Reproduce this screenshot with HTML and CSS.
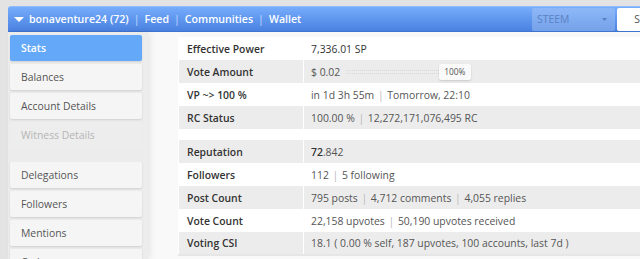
FILE: index.html
```html
<!DOCTYPE html>
<html>
<head>
<meta charset="utf-8">
<link rel="stylesheet" href="styles.css">
</head>
<body>
<div class="topbar">
  <div class="nav">
    <svg class="caret" width="10" height="5" viewBox="0 0 10 5"><path d="M0 0 L10 0 L5 5 Z" fill="#fff"/></svg>
    <span class="link">bonaventure24 (72)</span><span class="sep">|</span>
    <span class="link">Feed</span><span class="sep">|</span>
    <span class="link">Communities</span><span class="sep">|</span>
    <span class="link">Wallet</span>
  </div>
  <div class="tools">
    <div class="select"><span>STEEM</span><svg width="5" height="3" viewBox="0 0 5 3"><path d="M0 0 L5 0 L2.5 3 Z" fill="#5a7fc0"/></svg></div>
    <div class="search">S</div>
  </div>
</div>
<div class="layout">
  <aside class="sidebar">
    <div class="item active">Stats</div>
    <div class="item">Balances</div>
    <div class="item">Account Details</div>
    <div class="item disabled">Witness Details</div>
    <div class="spacer"></div>
    <div class="item">Delegations</div>
    <div class="item">Followers</div>
    <div class="item">Mentions</div>
    <div class="item">Orders</div>
  </aside>
  <main class="main">
    <table class="stats">
      <tr><th>Effective Power</th><td class="strong">7,336.01 SP</td></tr>
      <tr class="alt"><th>Vote Amount</th><td><div class="vote"><span>$ 0.02</span><span class="slider"><span class="track"></span><span class="badge">100%</span></span></div></td></tr>
      <tr><th>VP ~&gt; 100 %</th><td>in 1d 3h 55m <span class="bar">|</span> Tomorrow, 22:10</td></tr>
      <tr class="alt"><th>RC Status</th><td>100.00 % <span class="bar">|</span> 12,272,171,076,495 RC</td></tr>
      <tr class="gap"><th></th><td></td></tr>
      <tr class="alt"><th>Reputation</th><td><b>72</b>.842</td></tr>
      <tr><th>Followers</th><td>112 <span class="bar">|</span> 5 following</td></tr>
      <tr class="alt"><th>Post Count</th><td>795 posts <span class="bar">|</span> 4,712 comments <span class="bar">|</span> 4,055 replies</td></tr>
      <tr><th>Vote Count</th><td>22,158 upvotes <span class="bar">|</span> 50,190 upvotes received</td></tr>
      <tr class="alt"><th>Voting CSI</th><td>18.1 ( 0.00 % self, 187 upvotes, 100 accounts, last 7d )</td></tr>
    </table>
  </main>
</div>
</body>
</html>
```
FILE: styles.css
```css
* { box-sizing: border-box; }
html, body { margin: 0; padding: 0; }
body {
  background: #e3e3e3;
  font-family: "Open Sans", "DejaVu Sans", sans-serif;
  font-size: 10.4px;
  color: #555;
  width: 640px;
  height: 259px;
  overflow: hidden;
}
.topbar {
  margin: 6px 0 0 8px;
  height: 26px;
  border-radius: 3px 0 0 0;
  background: linear-gradient(#78adfb, #5a92ec 60%, #4b82e0);
  border-top: 1px solid #8dbcfc;
  border-bottom: 1px solid #3f74cf;
  display: flex;
  align-items: center;
  justify-content: space-between;
}
.nav {
  display: flex;
  align-items: center;
  padding-left: 6px;
  color: #fff;
  font-size: 10.6px;
  font-weight: 600;
  white-space: nowrap;
}
.caret { margin-right: 5px; margin-top: 1px; }
.sep { color: #c4dafb; font-weight: 400; margin: 0 5px; }
.tools { display: flex; align-items: center; gap: 2px; height: 100%; }
.select {
  width: 83px;
  height: 23px;
  background: rgba(170, 200, 245, 0.45);
  border-radius: 2px;
  display: flex;
  align-items: center;
  justify-content: space-between;
  padding: 0 8px 0 5px;
  color: #5c82c2;
  font-size: 10.4px;
}
.search {
  width: 23px;
  height: 23px;
  background: #fff;
  border-radius: 2px 0 0 2px;
  display: flex;
  align-items: center;
  justify-content: flex-end;
  color: #555;
  font-size: 10.4px;
  overflow: hidden;
}
.layout { display: flex; padding-left: 8px; }
.sidebar {
  width: 140px;
  flex: none;
  background: #ececec;
  padding: 3px 6px 0 2px;
  display: flex;
  flex-direction: column;
  gap: 3px;
  height: 227px;
  box-shadow: 3px 0 6px rgba(0,0,0,0.07);
  position: relative;
  z-index: 1;
}
.item {
  height: 26px;
  flex: none;
  background: #f5f5f5;
  border-radius: 2px;
  box-shadow: 0 1px 2px rgba(0,0,0,0.12);
  padding: 0 11px;
  line-height: 26px;
  color: #555;
  font-size: 10.4px;
  white-space: nowrap;
}
.item.active {
  background: #64a9f9;
  color: #fff;
  font-weight: 600;
}
.item.disabled { color: #b5b5b5; background: #ededed; box-shadow: none; }
.spacer { height: 8px; flex: none; }
.main {
  flex: 1;
  background: #f9f9f9;
  padding: 5px 0 0 30px;
  overflow: hidden;
}
.stats {
  border-collapse: collapse;
  width: 480px;
  background: #fff;
  border-left: 1px solid #eee;
  border-bottom: 2px solid #e6e6e6;
}
.stats th, .stats td {
  height: 23px;
  padding: 0 7px 0 8px;
  text-align: left;
  border-left: 1px solid #fff;
  white-space: nowrap;
  font-size: 10.4px;
}
.stats th { width: 125px; font-weight: 600; color: #333; }
.stats td { color: #555; padding-left: 7px; }
.stats td.strong { color: #333; }
.stats tr.alt th, .stats tr.alt td { background: #ececec; }
.stats tr.gap th, .stats tr.gap td { height: 11px; }
.stats td b { font-weight: 600; color: #333; }
.bar { color: #b8b8b8; margin: 0 1px; }
.vote { display: flex; align-items: center; }
.slider { display: flex; align-items: center; margin-left: 6px; }
.track {
  width: 93px;
  height: 4px;
  border-top: 1px dotted #d8d8d8;
  border-bottom: 1px dotted #d8d8d8;
}
.badge {
  background: #fafafa;
  border-radius: 2px;
  box-shadow: 0 1px 2px rgba(0,0,0,0.15);
  font-size: 8.4px;
  padding: 2px 5px;
  line-height: 12px;
  color: #555;
}
```
